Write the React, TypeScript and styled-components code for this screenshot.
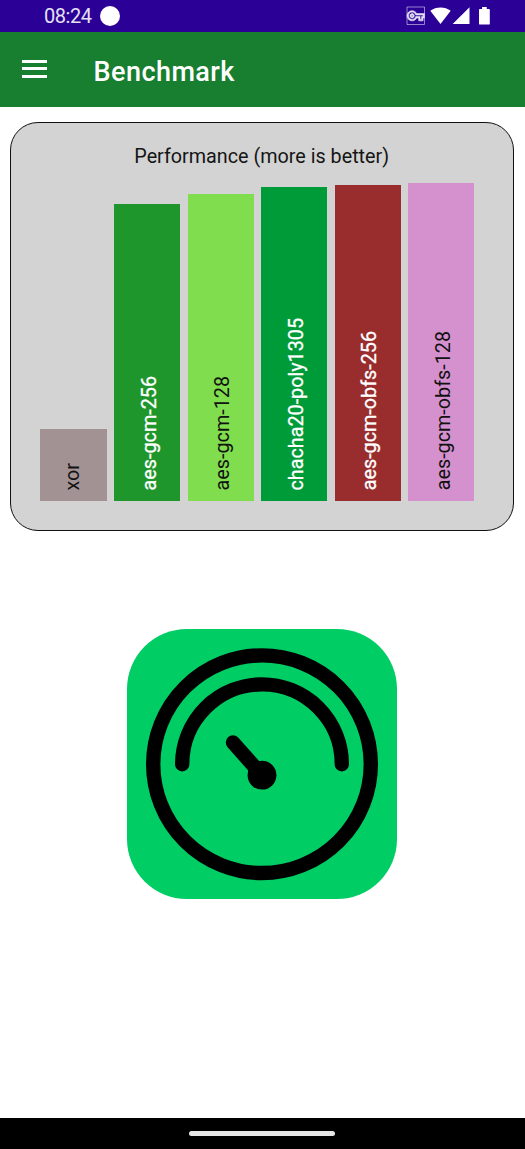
import React from "react";
import styled, { createGlobalStyle } from "styled-components";
import { MdOutlineVpnKey } from "react-icons/md";

const GlobalStyle = createGlobalStyle`
  *, *::before, *::after { box-sizing: border-box; }
  body { margin: 0; background: #fff; font-family: Roboto, "Liberation Sans", sans-serif; }
`;

const Screen = styled.div`
  display: flex;
  flex-direction: column;
  width: 525px;
  height: 1149px;
  overflow: hidden;
  background: #fff;
`;

const StatusBar = styled.header`
  display: flex;
  flex: none;
  align-items: center;
  justify-content: space-between;
  height: 31.5px;
  padding: 0 34px 0 44px;
  background: #2a0096;
  color: #fff;
`;

const Clock = styled.div`
  display: flex;
  align-items: center;
  gap: 8px;
  font-size: 20px;
  line-height: 32px;
  letter-spacing: -0.45px;
  color: #e6e0f4;
`;

const Dot = styled.span`
  width: 20.5px;
  height: 20.5px;
  border-radius: 50%;
  background: #fff;
`;

const StatusIcons = styled.div`
  display: flex;
  align-items: center;
  svg { display: block; }
`;

const KeyIcon = styled(MdOutlineVpnKey)`
  width: 17.5px;
  height: 17.5px;
  margin-right: 6px;
  overflow: visible;
  color: #e6e0f4;
  stroke: #e6e0f4;
  stroke-width: 0.8;
`;

const AppBar = styled.div`
  display: flex;
  flex: none;
  align-items: center;
  height: 75.8px;
  padding-left: 21.5px;
  background: #177f2f;
`;

const MenuButton = styled.button`
  display: flex;
  flex-direction: column;
  gap: 4.6px;
  width: 25.5px;
  margin: 0 46.5px 0 0;
  padding: 0 0 1px;
  border: 0;
  background: none;
`;

const MenuLine = styled.span`
  height: 2.9px;
  background: #fff;
`;

const PageTitle = styled.h1`
  margin: 5px 0 0;
  color: #fff;
  font-size: 27px;
  font-weight: 500;
  line-height: 36px;
  letter-spacing: 0.45px;
`;

const Content = styled.main`
  display: flex;
  flex: 1;
  flex-direction: column;
  align-items: center;
  padding: 14.7px 11px 0 10px;
`;

const ChartCard = styled.section`
  display: flex;
  flex: none;
  flex-direction: column;
  width: 100%;
  height: 409.5px;
  padding: 21px 39px 29.2px 29.45px;
  border: 1.3px solid #111;
  border-radius: 28px;
  background: #d3d3d3;
`;

const ChartTitle = styled.h2`
  margin: 0 0 0 9px;
  font-size: 19.75px;
  font-weight: 400;
  line-height: 26px;
  text-align: center;
  white-space: nowrap;
  color: #151515;
`;

const Bars = styled.div`
  display: flex;
  flex: 1;
  align-items: flex-end;
  gap: 7.45px;
`;

const Bar = styled.div<{ $height: number; $fill: string; $ink: string }>`
  display: flex;
  flex: none;
  align-items: flex-end;
  justify-content: center;
  width: 66.1px;
  height: ${(p) => p.$height}px;
  padding-bottom: 11px;
  background: ${(p) => p.$fill};
  color: ${(p) => p.$ink};
`;

const BarLabel = styled.span<{ $shift: number; $bold: boolean }>`
  margin-left: ${(p) => p.$shift}px;
  writing-mode: vertical-rl;
  transform: rotate(180deg);
  font-size: 19.75px;
  line-height: 24px;
  white-space: nowrap;
  -webkit-text-stroke: ${(p) => (p.$bold ? "0.3px" : "0")};
`;

const RunButton = styled.button`
  flex: none;
  width: 270px;
  height: 270px;
  margin: 97.3px 0 0;
  padding: 0;
  border: 0;
  border-radius: 60px;
  background: #00ce65;
  svg { display: block; }
`;

const NavBar = styled.footer`
  display: flex;
  flex: none;
  align-items: center;
  justify-content: center;
  height: 31px;
  padding-right: 1px;
  background: #000;
`;

const NavHandle = styled.span`
  width: 146px;
  height: 5.6px;
  border-radius: 3px;
  background: #e6e6e6;
`;

const results = [
  { name: "xor", height: 72.2, fill: "#a39294", ink: "#111", shift: -1 },
  { name: "aes-gcm-256", height: 297, fill: "#1e962b", ink: "#fff", shift: 5 },
  { name: "aes-gcm-128", height: 307.2, fill: "#80dd4d", ink: "#111", shift: 5 },
  { name: "chacha20-poly1305", height: 314.8, fill: "#009b39", ink: "#fff", shift: 5 },
  { name: "aes-gcm-obfs-256", height: 316.8, fill: "#992d2e", ink: "#fff", shift: 5 },
  { name: "aes-gcm-obfs-128", height: 318.7, fill: "#d591ce", ink: "#111", shift: 5 },
];

const SignalIcons = () => (
  <svg width="61" height="20" viewBox="0 0 61 20" fill="#fff">
    <path d="M0.3 4.8C5.8 0.3 15.2 0.3 20.7 4.8L10.5 18Z" />
    <path d="M39.5 1.2V18H22.7Z" />
    <path d="M49.8 2.9h2.3V1h4.6v1.9h2.3q.8 0 .8.8v14q0 .9-.8.9h-9.2q-.8 0-.8-.9v-14q0-.8.8-.8Z" />
  </svg>
);

const Gauge = () => (
  <svg width="270" height="270" viewBox="0 0 270 270" fill="none" stroke="#000" strokeWidth="14.4" strokeLinecap="round">
    <circle cx="135" cy="135.2" r="108.8" />
    <path d="M55.2 135.2a79.8 79.8 0 0 1 159.6 0" />
    <path d="M106 113.5L135 146.2" />
    <circle cx="135" cy="146.2" r="14.4" fill="#000" stroke="none" />
  </svg>
);

export default function App() {
  return (
    <Screen>
      <GlobalStyle />
      <StatusBar>
        <Clock>
          08:24
          <Dot />
        </Clock>
        <StatusIcons>
          <KeyIcon />
          <SignalIcons />
        </StatusIcons>
      </StatusBar>
      <AppBar>
        <MenuButton aria-label="Menu">
          <MenuLine />
          <MenuLine />
          <MenuLine />
        </MenuButton>
        <PageTitle>Benchmark</PageTitle>
      </AppBar>
      <Content>
        <ChartCard>
          <ChartTitle>Performance (more is better)</ChartTitle>
          <Bars>
            {results.map((r) => (
              <Bar key={r.name} $height={r.height} $fill={r.fill} $ink={r.ink}>
                <BarLabel $shift={r.shift} $bold={r.ink === "#fff"}>
                  {r.name}
                </BarLabel>
              </Bar>
            ))}
          </Bars>
        </ChartCard>
        <RunButton aria-label="Run benchmark">
          <Gauge />
        </RunButton>
      </Content>
      <NavBar>
        <NavHandle />
      </NavBar>
    </Screen>
  );
}
